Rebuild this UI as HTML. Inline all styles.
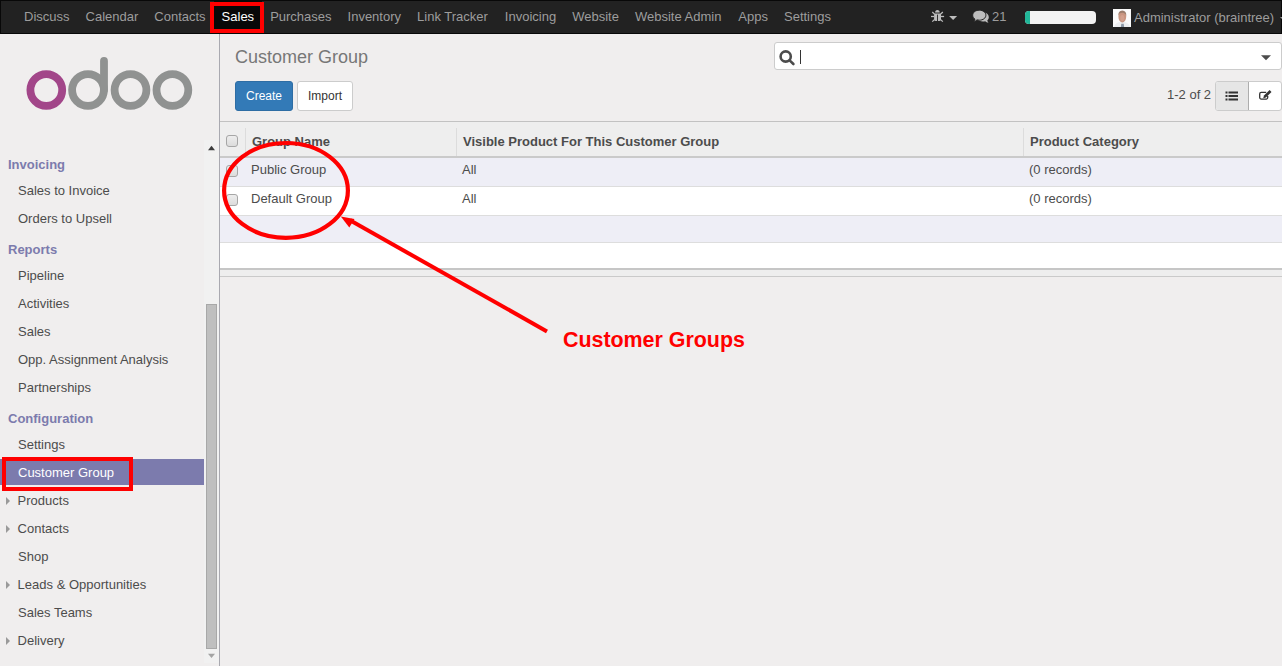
<!DOCTYPE html>
<html><head><meta charset="utf-8">
<style>
*{box-sizing:border-box;margin:0;padding:0}
html,body{width:1282px;height:666px;overflow:hidden;background:#f0eeee;font-family:"Liberation Sans",sans-serif;font-size:13px;color:#4c4c4c}
.t{position:absolute;white-space:nowrap;line-height:20px;height:20px}
#nav{position:absolute;left:0;top:0;width:1282px;height:34px;background:#222;border:1px solid #080808}
#navl{position:absolute;left:15px;top:0;display:flex;height:32px}
#navl div{padding:0 8px;line-height:32px;color:#9d9d9d;white-space:nowrap}
#side{position:absolute;left:0;top:34px;width:220px;height:632px;background:#f0eeee;border-right:1px solid #a9a9b0}
.mh{left:8px;color:#7c7bad;font-weight:bold}
.mi{left:18px;color:#4c4c4c}
.tri{position:absolute;left:6px;width:0;height:0;border-top:4px solid transparent;border-bottom:4px solid transparent;border-left:4px solid #9a9a9a}
.btn{position:absolute;height:30px;border-radius:3px;font-size:12px;line-height:28px;text-align:center;border:1px solid #ccc}
.cb{position:absolute;left:226px;width:12px;height:12px;border:1px solid #a6a6a6;border-radius:3px;background:linear-gradient(#ededed,#dcdcdc)}
.vd{position:absolute;width:1px;background:#dcdcdc}
</style></head><body>
<div id="nav">
  <svg style="position:absolute;left:924px;top:-1px" width="100" height="32">
    <g fill="#bdbdbd">
      <path d="M10.1 12.6 a2.3 2.7 0 0 1 4.6 0 z"/>
      <path d="M9.1 13.6 h6.9 v6 q0 1.4 -1.4 1.4 h-4.1 q-1.4 0 -1.4 -1.4 z"/>
      <polygon points="24.1,15.9 32.1,15.9 28.1,19.9"/>
    </g>
    <rect x="12.1" y="14.6" width="0.9" height="6.4" fill="#222"/>
    <g stroke="#bdbdbd" stroke-width="1.3">
      <line x1="7.3" y1="12" x2="9.4" y2="14.1"/><line x1="6" y1="16.5" x2="9.2" y2="16.5"/><line x1="7.3" y1="21.6" x2="9.4" y2="19.6"/>
      <line x1="17.8" y1="12" x2="15.7" y2="14.1"/><line x1="19.1" y1="16.5" x2="15.9" y2="16.5"/><line x1="17.8" y1="21.6" x2="15.7" y2="19.6"/>
    </g>
    <g transform="translate(-0.9,0)"><path d="M58.8 12.6 c3.6 0 5.9 2.1 5.9 4.6 c0 1.2 -.6 2.3 -1.5 3.1 c.2 1 .6 1.9 1.2 2.5 c-1.4 -.2 -2.5 -.8 -3.3 -1.6 c-.7 .1 -1.5 .2 -2.3 .2 c-2.5 0 -4.6 -1 -5.6 -2.5 z" fill="#bdbdbd"/>
    <path d="M55.2 10.2 c3.8 0 6.6 2.2 6.6 5 c0 2.8 -2.8 5 -6.6 5 c-.8 0 -1.6 -.1 -2.3 -.3 c-.8 .8 -1.8 1.3 -3.2 1.5 c.6 -.6 1 -1.4 1.1 -2.3 c-1.4 -.9 -2.2 -2.3 -2.2 -3.9 c0 -2.8 2.8 -5 6.6 -5 z" fill="#bdbdbd" stroke="#222" stroke-width="1"/></g>
    <text x="67" y="21" font-family="Liberation Sans" font-size="13" fill="#9d9d9d">21</text>
  </svg>
  <div style="position:absolute;left:1024px;top:10px;width:71px;height:13px;background:#f3f3f3;border-radius:4px;overflow:hidden"><div style="width:5px;height:13px;background:#21b799"></div></div>
  <svg style="position:absolute;left:1112px;top:8px" width="18" height="18">
    <rect width="18" height="18" fill="#fbfbfb"/>
    <path d="M1 18 q1 -5 8 -5.5 q7 .5 8 5.5 z" fill="#eceef0"/>
    <ellipse cx="9.3" cy="7.8" rx="3.9" ry="5.6" fill="#c99580"/>
    <path d="M5.3 7 q-.4 -5.4 4 -5.6 q4.3 .1 4 5.6 q-.8 -3 -4 -3.2 q-3.2 .1 -4 3.2 z" fill="#9c7d6c"/>
    <ellipse cx="9.3" cy="9" rx="2" ry="3" fill="#d8a896" opacity=".6"/>
    <path d="M8.3 14.8 h2.4 l.4 3.2 h-3.2 z" fill="#8c98a6"/>
  </svg>
  <div style="position:absolute;left:1133px;top:1px;line-height:32px;color:#9d9d9d;white-space:nowrap">Administrator (braintree)</div>
  <div style="position:absolute;left:1279px;top:16px;width:0;height:0;border-left:4px solid transparent;border-right:4px solid transparent;border-top:4px solid #9d9d9d"></div>
  <div id="navl">
    <div>Discuss</div><div>Calendar</div><div>Contacts</div><div style="color:#fff;background:#080808">Sales</div><div>Purchases</div><div>Inventory</div><div>Link Tracker</div><div style="margin-left:1px">Invoicing</div><div>Website</div><div>Website Admin</div><div style="margin-left:1px">Apps</div><div>Settings</div>
  </div>
</div>
<!-- sidebar -->
<div id="side"></div>
<svg style="position:absolute;left:0;top:0" width="220" height="130">
  <circle cx="46.3" cy="90" r="15.9" fill="none" stroke="#a24689" stroke-width="7.8"/>
  <circle cx="88" cy="90" r="15.9" fill="none" stroke="#909291" stroke-width="7.8"/>
  <line x1="104" y1="61" x2="104" y2="90" stroke="#909291" stroke-width="7.8" stroke-linecap="round"/>
  <circle cx="130.5" cy="90" r="15.9" fill="none" stroke="#909291" stroke-width="7.8"/>
  <circle cx="172.4" cy="90" r="15.9" fill="none" stroke="#909291" stroke-width="7.8"/>
</svg>
<div class="t mh" style="top:155px">Invoicing</div>
<div class="t mi" style="top:181px">Sales to Invoice</div>
<div class="t mi" style="top:209px">Orders to Upsell</div>
<div class="t mh" style="top:240px">Reports</div>
<div class="t mi" style="top:266px">Pipeline</div>
<div class="t mi" style="top:294px">Activities</div>
<div class="t mi" style="top:322px">Sales</div>
<div class="t mi" style="top:350px">Opp. Assignment Analysis</div>
<div class="t mi" style="top:378px">Partnerships</div>
<div class="t mh" style="top:409px">Configuration</div>
<div class="t mi" style="top:435px">Settings</div>
<div style="position:absolute;left:0;top:459px;width:204px;height:26px;background:#7c7bad"></div>
<div class="t mi" style="top:463px;color:#fff">Customer Group</div>
<div class="tri" style="top:497px"></div>
<div class="t mi" style="left:17.6px;top:491px">Products</div>
<div class="tri" style="top:525px"></div>
<div class="t mi" style="left:17.6px;top:519px">Contacts</div>
<div class="t mi" style="top:547px">Shop</div>
<div class="tri" style="top:581px"></div>
<div class="t mi" style="left:17.6px;top:575px">Leads &amp; Opportunities</div>
<div class="t mi" style="top:603px">Sales Teams</div>
<div class="tri" style="top:637px"></div>
<div class="t mi" style="left:17.6px;top:631px">Delivery</div>
<!-- scrollbar -->
<div style="position:absolute;left:204px;top:140px;width:15px;height:523px;background:#f1f1f1"></div>
<svg style="position:absolute;left:200px;top:140px" width="20" height="523"><polygon points="8,10.2 15,10.2 11.5,5.8" fill="#3c3c3c"/><polygon points="8,513.7 15,513.7 11.5,518" fill="#a3a3a3"/></svg>
<div style="position:absolute;left:206px;top:304px;width:11px;height:345px;background:#bfbfbf;border:1px solid #a8a8a8"></div>


<!-- control panel -->
<div class="t" style="left:235px;top:46px;font-size:18px;line-height:22px;height:22px;color:#777">Customer Group</div>
<div class="btn" style="left:235px;top:81px;width:58px;background:#337ab7;border-color:#2e6da4;color:#fff">Create</div>
<div class="btn" style="left:297px;top:81px;width:56px;background:#fff;color:#333">Import</div>
<div style="position:absolute;left:774px;top:42px;width:508px;height:28px;background:#fff;border:1px solid #ccc;border-radius:3px"></div>
<svg style="position:absolute;left:774px;top:42px" width="508" height="28">
  <circle cx="11.7" cy="14.5" r="5.1" fill="none" stroke="#4c4c4c" stroke-width="2.6"/>
  <line x1="15.6" y1="18.4" x2="19.4" y2="22" stroke="#4c4c4c" stroke-width="2.6" stroke-linecap="round"/>
  <rect x="26" y="8" width="1" height="14" fill="#333"/>
  <polygon points="487,13.2 497,13.2 492,18.2" fill="#4c4c4c"/>
</svg>
<div class="t" style="left:1167px;top:85px">1-2 of 2</div>
<div style="position:absolute;left:1215px;top:81px;width:67px;height:30px;background:#fff;border:1px solid #ccc;border-radius:3px;overflow:hidden">
  <div style="position:absolute;left:0;top:0;width:33px;height:28px;background:#e6e6e6;border-right:1px solid #adadad"></div>
</div>
<svg style="position:absolute;left:1215px;top:81px" width="67" height="30">
  <g fill="#333">
    <rect x="10.5" y="10.5" width="2" height="2"/><rect x="13.5" y="10.5" width="9.5" height="2"/>
    <rect x="10.5" y="14" width="2" height="2"/><rect x="13.5" y="14" width="9.5" height="2"/>
    <rect x="10.5" y="17.5" width="2" height="2"/><rect x="13.5" y="17.5" width="9.5" height="2"/>
  </g>
  <path d="M51.2 11.4 H46.2 a1.5 1.5 0 0 0 -1.5 1.5 V16.6 a1.5 1.5 0 0 0 1.5 1.5 H51.2 a1.5 1.5 0 0 0 1.5 -1.5 V15" fill="none" stroke="#333" stroke-width="1.3"/>
  <path d="M54.6 9 l1.9 1.9 l-5.6 5.6 l-2.7 0.8 l0.8 -2.7 z" fill="#333"/>
</svg>

<!-- list -->
<div style="position:absolute;left:220px;top:121px;width:1062px;height:1px;background:#c2c2c2"></div>
<div style="position:absolute;left:220px;top:122px;width:1062px;height:34px;background:#eee"></div>
<div style="position:absolute;left:220px;top:156px;width:1062px;height:2px;background:#cacaca"></div>
<div style="position:absolute;left:220px;top:158px;width:1062px;height:28px;background:#eeeef6"></div>
<div style="position:absolute;left:220px;top:186px;width:1062px;height:1px;background:#ddd"></div>
<div style="position:absolute;left:220px;top:187px;width:1062px;height:28px;background:#fff"></div>
<div style="position:absolute;left:220px;top:215px;width:1062px;height:1px;background:#ddd"></div>
<div style="position:absolute;left:220px;top:216px;width:1062px;height:26px;background:#eeeef6"></div>
<div style="position:absolute;left:220px;top:242px;width:1062px;height:1px;background:#ddd"></div>
<div style="position:absolute;left:220px;top:243px;width:1062px;height:25px;background:#fff"></div>
<div style="position:absolute;left:220px;top:268px;width:1062px;height:2px;background:#c6c6c6"></div>
<div style="position:absolute;left:220px;top:270px;width:1062px;height:6px;background:#eee"></div>
<div style="position:absolute;left:220px;top:276px;width:1062px;height:1px;background:#cacaca"></div>
<div class="vd" style="left:245px;top:128px;height:28px"></div>
<div class="vd" style="left:456px;top:128px;height:28px"></div>
<div class="vd" style="left:1023px;top:128px;height:28px"></div>
<div class="cb" style="top:135px"></div>
<div class="cb" style="top:165px"></div>
<div class="cb" style="top:194px"></div>
<div class="t" style="left:252px;top:132px;font-weight:bold">Group Name</div>
<div class="t" style="left:463px;top:132px;font-weight:bold">Visible Product For This Customer Group</div>
<div class="t" style="left:1030px;top:132px;font-weight:bold">Product Category</div>
<div class="t" style="left:251px;top:160px">Public Group</div>
<div class="t" style="left:462px;top:160px">All</div>
<div class="t" style="left:1029px;top:160px">(0 records)</div>
<div class="t" style="left:251px;top:189px">Default Group</div>
<div class="t" style="left:462px;top:189px">All</div>
<div class="t" style="left:1029px;top:189px">(0 records)</div>

<!-- annotations -->
<div style="position:absolute;left:210px;top:2px;width:54px;height:31px;border:4px solid #f00"></div>
<div style="position:absolute;left:2px;top:457px;width:131px;height:34px;border:4px solid #f00"></div>
<svg style="position:absolute;left:0;top:0" width="1282" height="666">
  <ellipse cx="286" cy="190.4" rx="61.9" ry="47.4" fill="none" stroke="#f00" stroke-width="4.2"/>
  <line x1="547" y1="331.4" x2="350" y2="220.3" stroke="#f00" stroke-width="4"/>
  <polygon points="340.8,216.5 354.5,219 349.3,227.5" fill="#f00"/>
</svg>
<div class="t" style="left:563px;top:327px;font-size:21.4px;line-height:26px;height:26px;font-weight:bold;color:#f00">Customer Groups</div>
</body></html>
